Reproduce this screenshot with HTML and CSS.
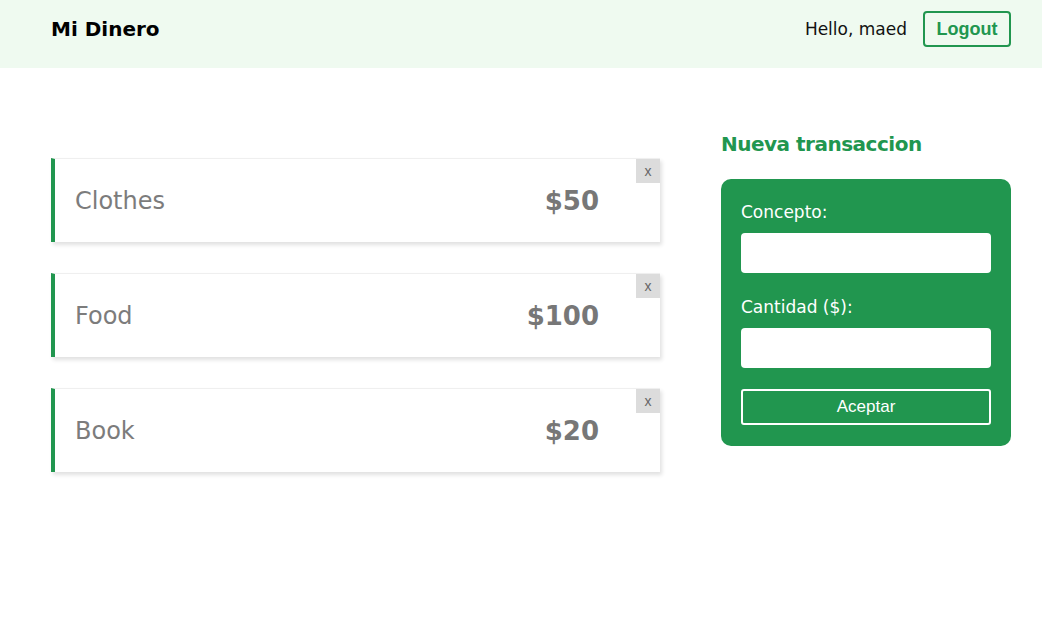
FILE: index.html
```html
<!DOCTYPE html>
<html lang="es">
<head>
<meta charset="utf-8">
<title>Mi Dinero</title>
<link rel="stylesheet" href="styles.css">
</head>
<body>
<header class="topbar">
  <div class="brand">Mi Dinero</div>
  <div class="user">
    <span class="hello">Hello, maed</span>
    <button class="logout">Logout</button>
  </div>
</header>
<main class="content">
  <section class="list">
    <div class="item">
      <span class="concept">Clothes</span>
      <span class="amount">$50</span>
      <button class="remove">x</button>
    </div>
    <div class="item">
      <span class="concept">Food</span>
      <span class="amount">$100</span>
      <button class="remove">x</button>
    </div>
    <div class="item">
      <span class="concept">Book</span>
      <span class="amount">$20</span>
      <button class="remove">x</button>
    </div>
  </section>
  <aside class="side">
    <h2 class="side-title">Nueva transaccion</h2>
    <form class="form">
      <label class="label">Concepto:</label>
      <input class="field" type="text">
      <label class="label">Cantidad ($):</label>
      <input class="field" type="text">
      <button class="submit" type="button">Aceptar</button>
    </form>
  </aside>
</main>
</body>
</html>
```
FILE: styles.css
```css
* { box-sizing: border-box; }
body {
  margin: 0;
  font-family: "DejaVu Sans", "Noto Sans", sans-serif;
  background: #fff;
  color: #111;
}
.topbar {
  height: 68px;
  background: #effaf0;
  display: flex;
  align-items: center;
  justify-content: space-between;
  padding: 0 31px 10px 51px;
}
.brand {
  font-size: 20px;
  font-weight: 700;
  color: #000;
}
.user {
  display: flex;
  align-items: center;
  gap: 16px;
}
.hello {
  font-size: 17px;
  color: #111;
}
.logout {
  font-family: "Liberation Sans", Arial, sans-serif;
  font-weight: 700;
  font-size: 18px;
  color: #21964f;
  background: transparent;
  border: 2px solid #21964f;
  border-radius: 4px;
  height: 36px;
  width: 88px;
  padding: 0;
}
.content {
  display: flex;
  gap: 61px;
  padding: 0 31px 40px 51px;
}
.list {
  width: 609px;
  display: flex;
  flex-direction: column;
  gap: 31px;
  padding-top: 90px;
}
.item {
  position: relative;
  height: 84px;
  background: #fff;
  border-left: 4px solid #21964f;
  border-top: 1px solid #efefef;
  box-shadow: 2px 3px 4px rgba(0,0,0,0.12);
  display: flex;
  align-items: center;
  justify-content: space-between;
  padding: 0 61px 0 20px;
}
.concept {
  font-size: 24px;
  color: #7c7c7c;
}
.amount {
  font-size: 26px;
  font-weight: 700;
  color: #777;
}
.remove {
  position: absolute;
  top: 0;
  right: 0;
  width: 24px;
  height: 24px;
  border: none;
  background: #dcdcdc;
  color: #666;
  font-family: "Liberation Sans", Arial, sans-serif;
  font-size: 14px;
  padding: 0;
}
.side {
  width: 290px;
}
.side-title {
  margin: 63px 0 22px;
  font-size: 20px;
  letter-spacing: -0.5px;
  font-weight: 700;
  color: #21964f;
  line-height: 26px;
}
.form {
  background: #21964f;
  border-radius: 10px;
  padding: 20px 20px 21px;
  display: flex;
  flex-direction: column;
}
.label {
  color: #fff;
  font-size: 17px;
  line-height: 26px;
  margin-bottom: 8px;
}
.field {
  height: 40px;
  border: none;
  border-radius: 4px;
  background: #fff;
  margin-bottom: 21px;
}
.submit {
  height: 36px;
  background: transparent;
  border: 2px solid #fff;
  border-radius: 3px;
  color: #fff;
  font-family: "Liberation Sans", Arial, sans-serif;
  font-size: 17px;
}
```
